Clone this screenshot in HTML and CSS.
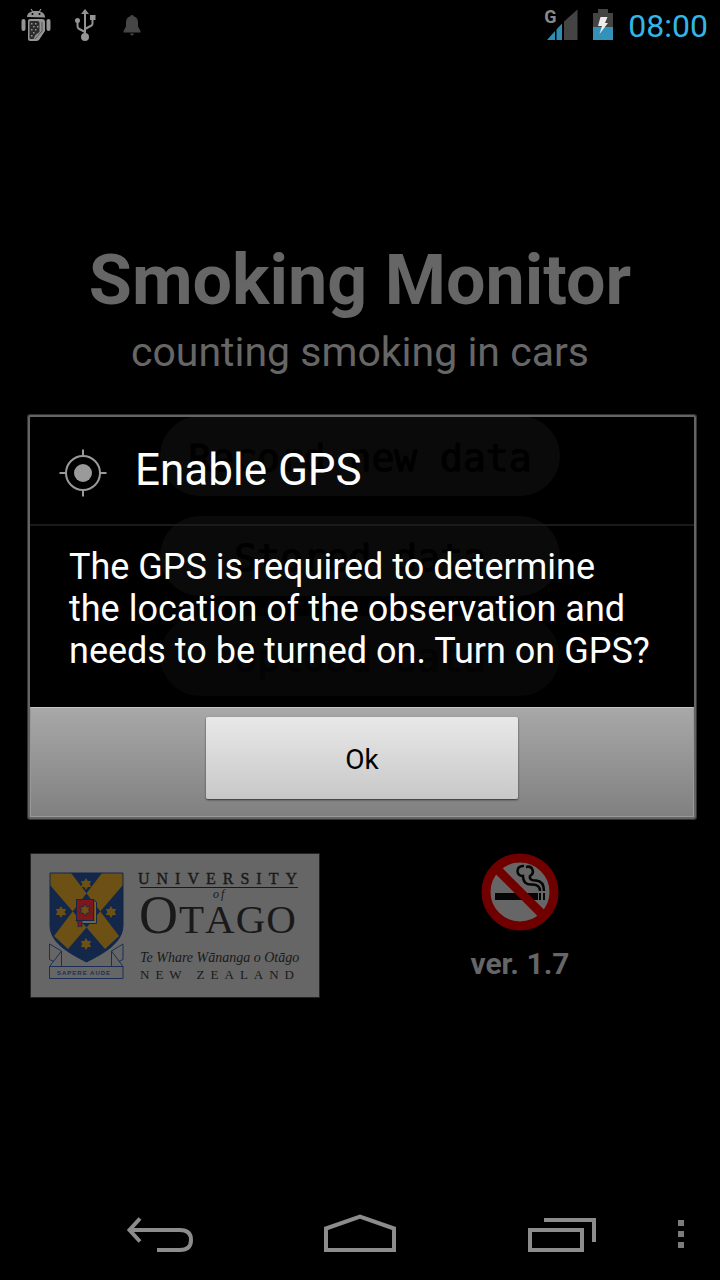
FILE: index.html
```html
<!DOCTYPE html>
<html lang="en">
<head>
<meta charset="utf-8">
<meta name="viewport" content="width=device-width, initial-scale=1">
<title>Smoking Monitor</title>
<link rel="stylesheet" href="styles.css">
</head>
<body>
<div class="screen">
  <header class="status">
    <div class="status-left">
      <svg width="30" height="34" viewBox="0 0 30 34" fill="#949494">
        <path d="M6 9C6 5.500 9 3 15 3s9 2.500 9 6.500z"/>
        <path d="M10 1l2 3M20 1l-2 3" stroke="#949494" stroke-width="1.200"/>
        <circle cx="11.500" cy="6" r="1" fill="#000"/><circle cx="18.500" cy="6" r="1" fill="#000"/>
        <rect x="0.500" y="11" width="4" height="12" rx="2"/><rect x="25.500" y="11" width="4" height="12" rx="2"/>
        <path d="M9 11h12q3 0 3 3v9l-6 9q-1 1-3 1H9q-2 0-2-2V13q0-2 2-2z"/>
        <path d="M9.500 13h7q2 0 2 2v9l-4 3-2 4H9.500q-1 0-1-1V14q0-1 1-1z" fill="#2c2c2c"/>
        <path d="M10 15h1.500v1.500H10zM14 15h1.500v1.500H14zM12 18h1.500v1.500H12zM16 18h1.500v1.500H16zM10 21h1.500v1.500H10zM14 21h1.500v1.500H14zM12 24h1.500v1.500H12zM10 27h1.500v1.500H10z"/>
        <path d="M21 14v9l-7 8" fill="none" stroke="#555" stroke-width="1"/>
      </svg>
      <svg class="usb" width="22" height="34" viewBox="0 0 22 34" fill="#949494">
        <path d="M11 1l4 5H7z"/><circle cx="11" cy="29" r="4"/><circle cx="3.500" cy="12.500" r="2.500"/><rect x="16" y="7" width="5.500" height="5"/>
        <path d="M11 5v22M11 24L4.500 20.500Q3.500 20 3.500 18v-5M11 21l6.500-3.500q1-.5 1-2V11" fill="none" stroke="#949494" stroke-width="2"/>
      </svg>
      <svg width="18" height="34" viewBox="0 0 18 34" fill="#464646">
        <path d="M7 8.500q0-1.500 2-1.500t2 1.500c3 .7 4 3 4 6v4l2.500 4.500v1.500H.5V23L3 18.500v-4c0-3 1-5.300 4-6zM7 25.500h4q-.5 2-2 2t-2-2z"/>
      </svg>
    </div>
    <div class="status-right">
      <div class="signal">
        <svg width="34" height="34" viewBox="0 0 34 34">
          <path d="M3 32l8-9v9zM12.500 21.500L18 15.500V32h-5.500z" fill="#2f8db3"/><path d="M20 13.500L33.500 1.500V32H20z" fill="#444"/>
        </svg>
        <span class="network">G</span>
      </div>
      <svg width="22" height="34" viewBox="0 0 22 34">
        <path d="M1 5h5V1h10v4h5v15H1z" fill="#444"/><path d="M1 19h20v13H1z" fill="#3492b8"/><path d="M8.500 9h7l-2.500 6h3L7.500 26l2.500-8H6z" fill="#ededed"/>
      </svg>
      <time class="clock">08:00</time>
    </div>
  </header>

  <div class="stage">
    <main class="app">
      <h1 class="title">Smoking Monitor</h1>
      <p class="tagline">counting smoking in cars</p>
      <div class="actions">
        <button class="action" type="button">Record new data</button>
        <button class="action" type="button">Stored data</button>
        <button class="action action-dim" type="button">Upload data</button>
      </div>
      <div class="credits">
        <svg class="logo" width="290" height="145" viewBox="0 0 290 145" role="img" aria-label="University of Otago">
          <defs>
            <path id="shield" d="M20 20H93V72C93 90 74 100 56.500 109C39 100 20 90 20 72z"/>
            <clipPath id="shield-clip"><use href="#shield"/></clipPath>
            <path id="star" d="M0-6L1.800-3.100 5.200-3 3.600 0 5.200 3 1.800 3.100 0 6-1.800 3.100-5.200 3-3.600 0-5.200-3-1.800-3.100z"/>
          </defs>
          <rect x="0.500" y="0.500" width="289" height="144" fill="#666" stroke="#222"/>
          <g clip-path="url(#shield-clip)">
            <rect x="20" y="20" width="74" height="90" fill="#13274a"/>
            <path d="M72 20H93V32L38 96 24 83zM41 20H20V32L75 96 89 83z" fill="#6d5114"/>
          </g>
          <use href="#shield" fill="none" stroke="#13274a"/>
          <g fill="#6d5114"><use href="#star" x="56" y="31"/><use href="#star" x="31" y="59"/><use href="#star" x="81" y="59"/><use href="#star" x="56" y="91"/></g>
          <path d="M49 70.500H66.500V49L63 46.500V67.500H46z" fill="#666" stroke="#13274a"/>
          <path d="M64.500 48V68.500" stroke="#6d5114"/>
          <path d="M48 67h4v7l-2-1-2 1z" fill="#7d171c" stroke="#13274a" stroke-width=".7"/>
          <rect x="46.500" y="46.500" width="17" height="21" fill="#7d171c" stroke="#13274a"/>
          <use href="#star" x="55" y="57" fill="#6d5114" stroke="#13274a" stroke-width=".8"/>
          <g fill="none" stroke="#1b2f56">
            <path d="M19.500 113.500H93V125.500H19.500zM31.500 113V98L19.500 91V106.500L24 108.500M31.500 98L19.500 113.500M81.500 113V98L93 91V106.500L89 108.500M81.500 98L93 113.500"/>
          </g>
          <text class="logo-motto" x="27" y="122">SAPERE AUDE</text>
          <text class="logo-univ" x="108" y="31">UNIVERSITY</text>
          <path d="M110 34.500H268" stroke="#191919"/>
          <text class="logo-of" x="183" y="45">of</text>
          <text class="logo-name" x="109" y="80"><tspan class="logo-initial">O</tspan>TAGO</text>
          <text class="logo-maori" x="110" y="109">Te Whare Wānanga o Otāgo</text>
          <text class="logo-nz" x="110" y="126">NEW ZEALAND</text>
        </svg>
        <div class="version">
          <svg width="78" height="78" viewBox="0 0 78 78" role="img" aria-label="No smoking">
            <circle cx="39" cy="39" r="34" fill="#666"/>
            <path d="M14 40h43v7H14zM58 40h2v7h-2zM62 40h2v7h-2z" fill="#050505"/>
            <path d="M43 13C34 12 35 24 42 23C42 29 45 32 51 31.500C56 31.500 59 33 59 38M45 14C52 12 54 20 49 23C48 27 52 27.500 55 27.500C61 28 63 32 63 38" fill="none" stroke="#050505" stroke-width="2.500"/>
            <path d="M17 17L61 61" stroke="#700000" stroke-width="9"/>
            <circle cx="39" cy="39" r="34" fill="none" stroke="#700000" stroke-width="9"/>
          </svg>
          <p class="version-text">ver. 1.7</p>
        </div>
      </div>
    </main>

    <div class="overlay">
      <section class="dialog" role="dialog" aria-labelledby="dialog-title">
        <div class="dialog-head">
          <svg width="48" height="48" viewBox="0 0 48 48" fill="none" stroke="#9a9a9a" stroke-width="2">
            <circle cx="24" cy="24" r="17"/><circle cx="24" cy="24" r="9" fill="#9a9a9a" stroke="none"/><path d="M24 0.500V7M24 41v6.500M0.500 24H7M41 24h6.500"/>
          </svg>
          <h2 class="dialog-title" id="dialog-title">Enable GPS</h2>
        </div>
        <p class="dialog-text">The GPS is required to determine<br>the location of the observation and<br>needs to be turned on. Turn on GPS?</p>
        <div class="dialog-foot"><button class="ok" type="button">Ok</button></div>
      </section>
    </div>
  </div>

  <nav class="nav">
    <button class="nav-button" type="button" aria-label="Back">
      <svg width="80" height="48" viewBox="0 0 80 48" fill="none" stroke="#8c8c8c" stroke-width="4">
        <path d="M37 42H60Q71 42 71 32T60 22H10M20 10.500L9.500 22 20 33.500"/>
      </svg>
    </button>
    <button class="nav-button" type="button" aria-label="Home">
      <svg width="80" height="48" viewBox="0 0 80 48" fill="none" stroke="#8c8c8c" stroke-width="4"><path d="M6 42V20.500L40 8.500 74 20.500V42z"/></svg>
    </button>
    <button class="nav-button" type="button" aria-label="Recent apps">
      <svg width="80" height="48" viewBox="0 0 80 48" fill="none" stroke="#8c8c8c" stroke-width="4"><path d="M10 22H62V42H10zM24 12H74V34"/></svg>
    </button>
    <button class="nav-button nav-menu" type="button" aria-label="Menu">
      <svg width="8" height="48" viewBox="0 0 8 48" fill="#7c7c7c"><path d="M1 12h6v6h-6zM1 23h6v6h-6zM1 34h6v6h-6z"/></svg>
    </button>
  </nav>
</div>
</body>
</html>
```
FILE: styles.css
```css
* { box-sizing: border-box; }

body {
  margin: 0;
  background: #000;
  color: #fff;
  font-family: Roboto, "Liberation Sans", sans-serif;
}

h1, h2, p { margin: 0; }

button {
  border: 0;
  padding: 0;
  background: none;
  font: inherit;
}

svg { display: block; }

.screen {
  min-height: 100vh;
  display: flex;
  flex-direction: column;
}

.status {
  height: 50px;
  padding: 0 12px 0 21px;
  display: flex;
  align-items: center;
  justify-content: space-between;
}

.status-left, .status-right { display: flex; align-items: center; }
.status-left { gap: 23px; }
.usb { margin-right: 4px; }
.status-right { gap: 14px; }
.signal { position: relative; }

.network {
  position: absolute;
  top: -1px;
  left: 0;
  color: #8a8a8a;
  font-size: 18px;
  font-weight: 700;
  line-height: 20px;
}

.clock {
  color: #33b5e5;
  font-size: 32px;
  line-height: 36px;
  padding-top: 2px;
}

.stage {
  position: relative;
  flex: 1;
  display: flex;
  flex-direction: column;
  justify-content: center;
}

.app { color: #666; text-align: center; }
.title { font-size: 70px; line-height: 88px; font-weight: 700; }
.tagline { margin-top: 4px; font-size: 41px; line-height: 48px; }

.actions {
  width: 400px;
  margin: 40px auto 157px;
  display: flex;
  flex-direction: column;
  gap: 20px;
}

.action {
  height: 80px;
  padding-top: 4px;
  border-radius: 40px;
  background: #0a0a0a;
  color: #000;
  font-family: "DejaVu Sans Mono", monospace;
  font-size: 38px;
  -webkit-text-stroke: 1px #000;
}

.action-dim { background: #070707; color: #030303; -webkit-text-stroke-color: #030303; }

.credits { display: flex; padding-left: 30px; }
.logo { flex: none; }

.version {
  flex: 1;
  display: flex;
  flex-direction: column;
  align-items: center;
}

.version-text {
  margin-top: 15px;
  font-size: 30px;
  line-height: 36px;
  font-weight: 700;
}

.logo text { font-family: "Liberation Serif", serif; fill: #191919; }
.logo .logo-univ { font-size: 16px; letter-spacing: 7px; stroke: #191919; stroke-width: 0.4px; }
.logo .logo-of { font-size: 12px; font-style: italic; letter-spacing: 2px; }
.logo .logo-name { font-size: 41px; font-kerning: none; letter-spacing: 1px; }
.logo .logo-initial { font-size: 54px; }
.logo .logo-maori { font-size: 14px; font-style: italic; }
.logo .logo-nz { font-size: 13px; letter-spacing: 6px; }
.logo .logo-motto { font-family: "Liberation Sans", sans-serif; font-size: 6px; font-weight: 700; letter-spacing: 1px; fill: #1b2f56; }

.overlay {
  position: absolute;
  inset: 0;
  padding: 0 24px 0 28px;
  display: flex;
  align-items: center;
}

.dialog {
  flex: 1;
  border: 2px solid #646464;
  border-radius: 2px;
  box-shadow: 0 0 0 1px #333;
}

.dialog-head {
  height: 109px;
  padding: 5px 29px 0;
  border-bottom: 2px solid #1a1a1a;
  display: flex;
  align-items: center;
  gap: 28px;
}

.dialog-title { padding-bottom: 6px; font-size: 44px; line-height: 52px; font-weight: 400; }
.dialog-text { padding: 20px 39px 35px; font-size: 36px; line-height: 42px; }

.dialog-foot {
  padding: 9px 0 17px;
  border: 1px solid #999;
  border-top-color: #c4c4c4;
  background: linear-gradient(#a8a8a8, #808080);
  display: flex;
  justify-content: center;
}

.ok {
  width: 47%;
  height: 82px;
  padding-top: 2px;
  border-radius: 2px;
  background: linear-gradient(#e8e8e8, #c8c8c8);
  box-shadow: 0 1px 2px #333;
  color: #000;
  font-size: 28px;
}

.nav {
  height: 96px;
  padding-left: 60px;
  display: grid;
  grid-template-columns: 1fr 1fr 1fr 60px;
}

.nav-button { display: flex; align-items: center; justify-content: center; }
.nav-menu { padding-right: 18px; }
```
